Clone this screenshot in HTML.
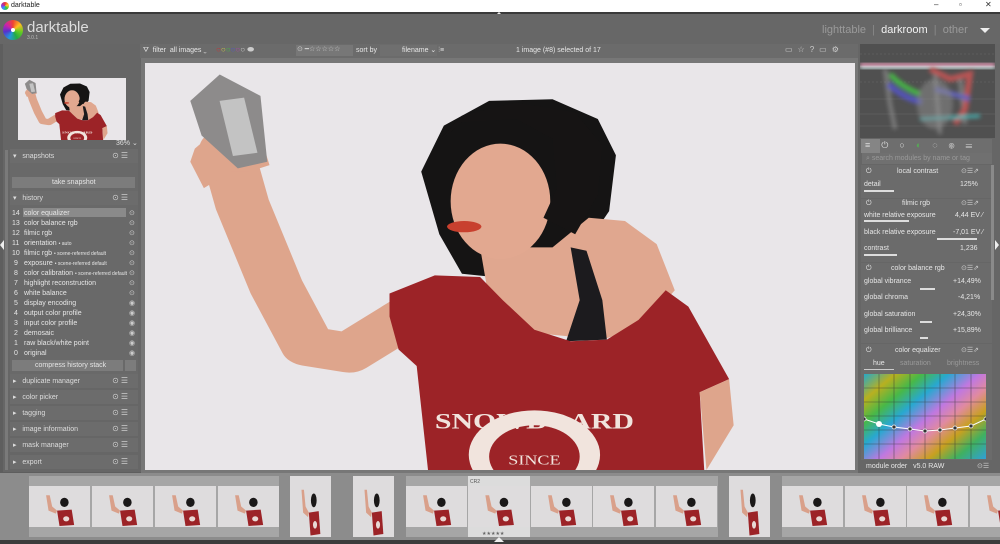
<!DOCTYPE html>
<html><head><meta charset="utf-8">
<style>
*{margin:0;padding:0;box-sizing:border-box}
body{width:1000px;height:544px;overflow:hidden;background:#5e5e5e;font-family:"Liberation Sans",sans-serif;position:relative;color:#e0e0e0}
.a{position:absolute}
.t{position:absolute;font-size:7px;color:#e6e6e6;white-space:nowrap;line-height:8px}
.hd{position:absolute;left:10px;width:128px;height:14px;background:#6c6c6c}
.hd span{position:absolute;top:3px;font-size:7px;color:#ddd}
.ic{position:absolute;right:8px;top:2px;font-size:8px;color:#ccc;letter-spacing:2px}
.rm{position:absolute;left:861px;width:131px;background:#6b6b6b}
.sl{position:absolute;height:2px;background:#ddd}
</style></head><body>
<svg width="0" height="0" style="position:absolute">
<defs>
<filter id="bl"><feGaussianBlur stdDeviation="2"/></filter>
<symbol id="ph" viewBox="0 0 1568 1236" preserveAspectRatio="none">
<rect width="1568" height="1236" fill="#e9e6e9"/>
<path d="M180 260 L215 430 L290 680 L360 860 L450 880 L580 770" fill="none" stroke="#dea58c" stroke-width="120" stroke-linejoin="round" stroke-linecap="round"/>
<polygon points="110,260 170,190 250,200 275,310 230,330 190,330 130,380 100,300" fill="#dea58c"/>
<polygon points="100,115 165,35 255,100 270,300 205,320 125,220" fill="#8d8b8b"/>
<rect x="180" y="110" width="55" height="170" fill="#c3c3c3" transform="rotate(-10 200 200)"/>
<polygon points="610,330 660,190 760,115 900,110 1000,170 1040,280 1025,450 990,520 940,560 900,610 770,650 700,640 650,520" fill="#151414"/>
<polygon points="740,560 900,560 980,470 1060,480 1130,550 1170,690 1100,800 1010,840 860,820 760,720" fill="#e0a78f"/>
<ellipse cx="785" cy="420" rx="110" ry="175" fill="#e2a890"/>
<polygon points="640,250 700,180 820,170 900,230 910,380 880,470 950,520 1000,400 1010,250 950,150 820,120 700,160" fill="#161414"/>
<polygon points="940,560 975,570 1010,720 1020,840 930,845 960,720" fill="#1c1b1e"/>
<ellipse cx="705" cy="497" rx="38" ry="17" fill="#c8402e"/>
<polygon points="540,700 640,645 740,650 790,720 860,810 940,845 1020,840 1090,780 1150,690 1200,740 1290,960 1225,1000 1235,1236 625,1236 600,920 560,870 540,770" fill="#9c2327"/>
<polygon points="1225,1000 1290,960 1300,1100 1240,1236" fill="#dea58c"/>
<ellipse cx="860" cy="1190" rx="145" ry="135" fill="#f1e4dd"/>
<ellipse cx="860" cy="1195" rx="100" ry="95" fill="#9c2327"/>
<text x="860" y="1110" font-family="Liberation Serif,serif" font-size="66" font-weight="bold" fill="#f1e4dd" text-anchor="middle">SNOWBOARD</text>
<text x="860" y="1220" font-family="Liberation Serif,serif" font-size="40" fill="#f1e4dd" text-anchor="middle">SINCE</text>
</symbol>
<symbol id="th" viewBox="0 0 100 80" preserveAspectRatio="none">
<rect width="100" height="80" fill="#dedcdd"/>
<polygon points="28,18 34,18 38,40 46,48 44,54 32,48" fill="#d9a08a"/>
<ellipse cx="58" cy="32" rx="7" ry="9" fill="#1a1818"/>
<polygon points="46,48 70,46 74,76 50,78" fill="#9c2327"/>
<circle cx="61" cy="64" r="5" fill="#e8d8d4"/>
</symbol>
</defs></svg>

<!-- title bar -->
<div class="a" style="left:0;top:0;width:1000px;height:12px;background:#fff"></div>
<div class="a" style="left:1px;top:2px;width:8px;height:8px;border-radius:50%;background:conic-gradient(#e33,#fc3,#3c3,#39f,#93c,#e33)"></div>
<div class="t" style="left:11px;top:2px;color:#222">darktable</div>
<div class="t" style="left:934px;top:1px;color:#333;font-size:8px">–</div>
<div class="t" style="left:959px;top:1px;color:#333;font-size:8px">▫</div>
<div class="t" style="left:985px;top:1px;color:#333;font-size:8px">✕</div>
<div class="a" style="left:0;top:12px;width:1000px;height:2px;background:#3a3a3a"></div>
<div class="a" style="left:494px;top:12px;width:0;height:0;border-left:5px solid transparent;border-right:5px solid transparent;border-bottom:5px solid #eee"></div>

<!-- header -->
<div class="a" style="left:0;top:14px;width:1000px;height:30px;background:#676767"></div>
<div class="a" style="left:3px;top:20px;width:20px;height:20px;border-radius:50%;background:conic-gradient(#e43,#fb2,#6c2,#2a4,#29d,#53c,#c2a,#e43)"></div>
<div class="a" style="left:11px;top:28px;width:4px;height:4px;background:#fff;border-radius:50%"></div>
<div class="t" style="left:27px;top:20px;font-size:15px;line-height:16px;color:#ddd">darktable</div>
<div class="t" style="left:27px;top:35px;font-size:5px;line-height:6px;color:#bbb">3.0.1</div>
<div class="t" style="left:822px;top:24px;font-size:11px;line-height:12px;color:#9a9a9a">lighttable <span style="color:#888">&nbsp;|&nbsp;</span> <span style="color:#f2f2f2">darkroom</span> <span style="color:#888">&nbsp;|&nbsp;</span> other</div>
<div class="a" style="left:980px;top:28px;border-left:5px solid transparent;border-right:5px solid transparent;border-top:5px solid #eee"></div>

<!-- left panel -->
<div class="a" style="left:3px;top:44px;width:138px;height:428px;background:#666"></div>
<div class="a" style="left:5px;top:150px;width:3px;height:320px;background:#7a7a7a"></div>
<div class="a" style="left:18px;top:78px;width:108px;height:62px"><svg width="108" height="62"><use href="#ph" width="108" height="62"/></svg></div>
<div class="t" style="left:116px;top:140px;color:#ddd">36% ⌄</div>

<div class="hd" style="top:149px"><span style="left:3px">▾ &nbsp; snapshots</span><div class="ic">⊙☰</div></div>
<div class="a" style="left:10px;top:163px;width:128px;height:28px;background:#696969"></div>
<div class="a" style="left:12px;top:177px;width:123px;height:11px;background:#7c7c7c"></div>
<div class="t" style="left:52px;top:179px">take snapshot</div>
<div class="hd" style="top:191px"><span style="left:3px">▾ &nbsp; history</span><div class="ic">⊙☰</div></div>
<div class="a" style="left:10px;top:205px;width:128px;height:170px;background:#696969"></div>
<div class="a" style="left:23px;top:208px;width:103px;height:9px;background:#8a8a8a"></div>
<div class="t" style="left:12px;top:209px;line-height:10px">14<br>13<br>12<br>11<br>10<br>&nbsp;9<br>&nbsp;8<br>&nbsp;7<br>&nbsp;6<br>&nbsp;5<br>&nbsp;4<br>&nbsp;3<br>&nbsp;2<br>&nbsp;1<br>&nbsp;0</div>
<div class="t" style="left:24px;top:209px;line-height:10px">color equalizer<br>color balance rgb<br>filmic rgb<br>orientation <span style="font-size:5px">• auto</span><br>filmic rgb <span style="font-size:5px">• scene-referred default</span><br>exposure <span style="font-size:5px">• scene-referred default</span><br>color calibration <span style="font-size:5px">• scene-referred default</span><br>highlight reconstruction<br>white balance<br>display encoding<br>output color profile<br>input color profile<br>demosaic<br>raw black/white point<br>original</div>
<div class="t" style="left:129px;top:209px;line-height:10px;color:#ccc">⊙<br>⊙<br>⊙<br>⊙<br>⊙<br>⊙<br>⊙<br>⊙<br>⊙<br>◉<br>◉<br>◉<br>◉<br>◉<br>◉</div>
<div class="a" style="left:12px;top:360px;width:111px;height:11px;background:#7c7c7c"></div>
<div class="t" style="left:35px;top:362px">compress history stack</div>
<div class="a" style="left:125px;top:360px;width:11px;height:11px;background:#7c7c7c"></div>
<div class="hd" style="top:374px"><span style="left:3px">▸ &nbsp; duplicate manager</span><div class="ic">⊙☰</div></div>
<div class="hd" style="top:390px"><span style="left:3px">▸ &nbsp; color picker</span><div class="ic">⊙☰</div></div>
<div class="hd" style="top:406px"><span style="left:3px">▸ &nbsp; tagging</span><div class="ic">⊙☰</div></div>
<div class="hd" style="top:422px"><span style="left:3px">▸ &nbsp; image information</span><div class="ic">⊙☰</div></div>
<div class="hd" style="top:438px"><span style="left:3px">▸ &nbsp; mask manager</span><div class="ic">⊙☰</div></div>
<div class="hd" style="top:455px"><span style="left:3px">▸ &nbsp; export</span><div class="ic">⊙☰</div></div>
<div class="a" style="left:0;top:240px;border-top:5px solid transparent;border-bottom:5px solid transparent;border-right:4px solid #eee"></div>

<!-- center toolbar -->
<div class="a" style="left:140px;top:44px;width:718px;height:14px;background:#6b6b6b"></div>
<div class="t" style="left:143px;top:47px">⛛ &nbsp;filter&nbsp; all images ⌄</div>
<div class="t" style="left:216px;top:46px;font-size:8px"><span style="color:#c33">○</span><span style="color:#cc4">○</span><span style="color:#4b4">○</span><span style="color:#55c">○</span><span style="color:#a4a">○</span><span style="color:#ccc">○</span> <span style="color:#ccc">⬬</span></div>
<div class="a" style="left:296px;top:45px;width:57px;height:11px;background:#777"></div>
<div class="t" style="left:297px;top:46px;color:#ccc">⊙ ━☆☆☆☆☆</div>
<div class="t" style="left:356px;top:47px">sort by</div>
<div class="a" style="left:380px;top:45px;width:57px;height:11px;background:#6f6f6f"></div>
<div class="t" style="left:402px;top:47px">filename ⌄ ⫶≡</div>
<div class="t" style="left:516px;top:47px">1 image (#8) selected of 17</div>
<div class="t" style="left:785px;top:46px;color:#ccc;font-size:8px;letter-spacing:5px">▭☆?▭⚙</div>

<!-- main image -->
<div class="a" style="left:141px;top:58px;width:718px;height:416px;background:#777"></div>
<div class="a" style="left:145px;top:63px;width:710px;height:407px"><svg width="710" height="407"><use href="#ph" width="710" height="407"/></svg></div>

<!-- right panel -->
<div class="a" style="left:858px;top:44px;width:142px;height:430px;background:#666"></div>
<div class="a" style="left:860px;top:44px;width:135px;height:94px;background:#505050">
<svg width="135" height="94">
<g stroke="#666" stroke-width="0.5"><line x1="0" y1="10" x2="135" y2="10" stroke-dasharray="2 2"/><line x1="0" y1="38" x2="135" y2="38" stroke-dasharray="2 2"/><line x1="0" y1="55" x2="135" y2="55"/><line x1="0" y1="70" x2="135" y2="70"/><line x1="0" y1="82" x2="135" y2="82"/></g>
<rect x="0" y="19" width="135" height="4" fill="#f2a0c0" filter="url(#bl)"/><rect x="0" y="22" width="135" height="3" fill="#e8ffff" filter="url(#bl)"/>
<g filter="url(#bl)" opacity=".85">
<path d="M25 25 L30 60 L35 85 M75 30 L80 90 M100 35 L105 80" stroke="#bbb" stroke-width="4" fill="none" opacity=".5"/>
<path d="M30 30 Q40 42 60 50" stroke="#4c4" stroke-width="5" fill="none"/>
<path d="M28 40 Q45 55 62 58" stroke="#55c" stroke-width="6" fill="none"/>
<path d="M70 25 L90 35 L110 30 L105 65 L95 80" stroke="#c55" stroke-width="6" fill="none"/>
<path d="M75 45 L110 55" stroke="#66c" stroke-width="5"/>
<path d="M60 75 L120 72" stroke="#4cc" stroke-width="3"/>
<ellipse cx="75" cy="60" rx="18" ry="25" fill="#999" opacity=".5"/>
</g>
</svg></div>
<div class="a" style="left:861px;top:139px;width:131px;height:14px;background:#6e6e6e"></div>
<div class="a" style="left:861px;top:139px;width:19px;height:14px;background:#858585"></div>
<div class="t" style="left:865px;top:141px;font-size:9px;letter-spacing:11px;color:#ddd">≡⏻○<span style="color:#5a5">◐</span>◌⊛☰</div>
<div class="a" style="left:862px;top:153px;width:130px;height:11px;background:#707070"></div>
<div class="t" style="left:866px;top:155px;color:#999">⌕ search modules by name or tag</div>

<div class="rm" style="top:165px;height:33px"></div>
<div class="t" style="left:866px;top:168px">⏻</div><div class="t" style="left:897px;top:168px">local contrast</div><div class="t" style="left:961px;top:168px;color:#ccc">⊙☰⇗</div>
<div class="t" style="left:864px;top:181px">detail</div><div class="t" style="left:960px;top:181px">125%</div>
<div class="sl" style="left:864px;top:190px;width:30px"></div>

<div class="rm" style="top:199px;height:63px"></div>
<div class="t" style="left:866px;top:200px">⏻</div><div class="t" style="left:902px;top:200px">filmic rgb</div><div class="t" style="left:961px;top:200px;color:#ccc">⊙☰⇗</div>
<div class="t" style="left:864px;top:212px">white relative exposure</div><div class="t" style="left:955px;top:212px">4,44 EV ⁄</div>
<div class="sl" style="left:864px;top:220px;width:45px"></div>
<div class="t" style="left:864px;top:229px">black relative exposure</div><div class="t" style="left:953px;top:229px">-7,01 EV ⁄</div>
<div class="sl" style="left:937px;top:238px;width:40px"></div>
<div class="t" style="left:864px;top:245px">contrast</div><div class="t" style="left:960px;top:245px">1,236</div>
<div class="sl" style="left:864px;top:254px;width:33px"></div>

<div class="rm" style="top:263px;height:80px"></div>
<div class="t" style="left:866px;top:265px">⏻</div><div class="t" style="left:891px;top:265px">color balance rgb</div><div class="t" style="left:961px;top:265px;color:#ccc">⊙☰⇗</div>
<div class="t" style="left:864px;top:278px">global vibrance</div><div class="t" style="left:953px;top:278px">+14,49%</div>
<div class="sl" style="left:920px;top:288px;width:15px"></div>
<div class="t" style="left:864px;top:294px">global chroma</div><div class="t" style="left:958px;top:294px">-4,21%</div>
<div class="t" style="left:864px;top:311px">global saturation</div><div class="t" style="left:953px;top:311px">+24,30%</div>
<div class="sl" style="left:920px;top:321px;width:12px"></div>
<div class="t" style="left:864px;top:327px">global brilliance</div><div class="t" style="left:953px;top:327px">+15,89%</div>
<div class="sl" style="left:920px;top:337px;width:8px"></div>

<div class="rm" style="top:344px;height:116px"></div>
<div class="t" style="left:866px;top:347px">⏻</div><div class="t" style="left:895px;top:347px">color equalizer</div><div class="t" style="left:961px;top:347px;color:#ccc">⊙☰⇗</div>
<div class="t" style="left:873px;top:360px">hue</div><div class="t" style="left:900px;top:360px;color:#999">saturation</div><div class="t" style="left:947px;top:360px;color:#999">brightness</div>
<div class="a" style="left:864px;top:369px;width:30px;height:1px;background:#ccc"></div>
<div class="a" style="left:864px;top:374px;width:122px;height:85px;background:linear-gradient(140deg,#28a8c8 0%,#b8b020 14%,#48b848 26%,#28a8d0 38%,#c078e0 52%,#e08aa0 62%,#c8a020 74%,#40b060 86%,#30a0d8 100%)">
<svg width="122" height="85"><g stroke="#333" stroke-width="0.6" opacity=".7">
<line x1="15" y1="0" x2="15" y2="85"/><line x1="30" y1="0" x2="30" y2="85"/><line x1="46" y1="0" x2="46" y2="85"/><line x1="61" y1="0" x2="61" y2="85"/><line x1="76" y1="0" x2="76" y2="85"/><line x1="91" y1="0" x2="91" y2="85"/><line x1="107" y1="0" x2="107" y2="85"/>
<line x1="0" y1="14" x2="122" y2="14"/><line x1="0" y1="28" x2="122" y2="28"/><line x1="0" y1="42" x2="122" y2="42"/><line x1="0" y1="56" x2="122" y2="56"/><line x1="0" y1="70" x2="122" y2="70"/></g>
<polyline points="0,45 15,50 30,53 46,55 61,57 76,56 91,54 107,52 122,45" fill="none" stroke="#fff" stroke-width="1"/>
<g fill="#333" stroke="#fff" stroke-width=".7"><circle cx="0" cy="45" r="2"/><circle cx="30" cy="53" r="2"/><circle cx="46" cy="55" r="2"/><circle cx="61" cy="57" r="2"/><circle cx="76" cy="56" r="2"/><circle cx="91" cy="54" r="2"/><circle cx="107" cy="52" r="2"/><circle cx="122" cy="45" r="2"/></g>
<circle cx="15" cy="50" r="3" fill="#fff"/></svg></div>
<div class="t" style="left:866px;top:463px">module order &nbsp;&nbsp;v5.0 RAW</div><div class="t" style="left:977px;top:463px;color:#ccc">⊙☰</div>
<div class="a" style="left:991px;top:165px;width:3px;height:135px;background:#8a8a8a"></div>
<div class="a" style="left:995px;top:240px;border-top:5px solid transparent;border-bottom:5px solid transparent;border-left:4px solid #eee"></div>

<!-- filmstrip -->
<div class="a" style="left:0;top:473px;width:1000px;height:67px;background:#8c8c8c"></div>
<div class="a" style="left:0;top:540px;width:1000px;height:4px;background:#3c3c3c"></div>
<div class="a" style="left:29px;top:476px;width:250px;height:61px;background:#a6a6a6"></div>
<div class="a" style="left:29px;top:486px;width:61px;height:41px"><svg width="61" height="41"><use href="#th" width="61" height="41"/></svg></div>
<div class="a" style="left:92px;top:486px;width:61px;height:41px"><svg width="61" height="41"><use href="#th" width="61" height="41"/></svg></div>
<div class="a" style="left:155px;top:486px;width:61px;height:41px"><svg width="61" height="41"><use href="#th" width="61" height="41"/></svg></div>
<div class="a" style="left:218px;top:486px;width:61px;height:41px"><svg width="61" height="41"><use href="#th" width="61" height="41"/></svg></div>
<div class="a" style="left:290px;top:476px;width:41px;height:61px"><svg width="41" height="61"><use href="#th" width="41" height="61"/></svg></div>
<div class="a" style="left:353px;top:476px;width:41px;height:61px"><svg width="41" height="61"><use href="#th" width="41" height="61"/></svg></div>
<div class="a" style="left:406px;top:476px;width:312px;height:61px;background:#a6a6a6"></div>
<div class="a" style="left:468px;top:476px;width:62px;height:61px;background:#dcdcdc"></div>
<div class="t" style="left:470px;top:478px;font-size:5px;color:#555">CR2</div>
<div class="t" style="left:482px;top:530px;font-size:5px;color:#666">★★★★★</div>
<div class="a" style="left:406px;top:486px;width:61px;height:41px"><svg width="61" height="41"><use href="#th" width="61" height="41"/></svg></div>
<div class="a" style="left:468px;top:486px;width:62px;height:41px"><svg width="62" height="41"><use href="#th" width="62" height="41"/></svg></div>
<div class="a" style="left:531px;top:486px;width:61px;height:41px"><svg width="61" height="41"><use href="#th" width="61" height="41"/></svg></div>
<div class="a" style="left:593px;top:486px;width:61px;height:41px"><svg width="61" height="41"><use href="#th" width="61" height="41"/></svg></div>
<div class="a" style="left:656px;top:486px;width:61px;height:41px"><svg width="61" height="41"><use href="#th" width="61" height="41"/></svg></div>
<div class="a" style="left:729px;top:476px;width:41px;height:61px"><svg width="41" height="61"><use href="#th" width="41" height="61"/></svg></div>
<div class="a" style="left:782px;top:476px;width:218px;height:61px;background:#a6a6a6"></div>
<div class="a" style="left:782px;top:486px;width:61px;height:41px"><svg width="61" height="41"><use href="#th" width="61" height="41"/></svg></div>
<div class="a" style="left:845px;top:486px;width:61px;height:41px"><svg width="61" height="41"><use href="#th" width="61" height="41"/></svg></div>
<div class="a" style="left:907px;top:486px;width:61px;height:41px"><svg width="61" height="41"><use href="#th" width="61" height="41"/></svg></div>
<div class="a" style="left:970px;top:486px;width:30px;height:41px;overflow:hidden"><svg width="61" height="41"><use href="#th" width="61" height="41"/></svg></div>
<div class="a" style="left:494px;top:537px;border-left:5px solid transparent;border-right:5px solid transparent;border-bottom:5px solid #eee"></div>
</body></html>
